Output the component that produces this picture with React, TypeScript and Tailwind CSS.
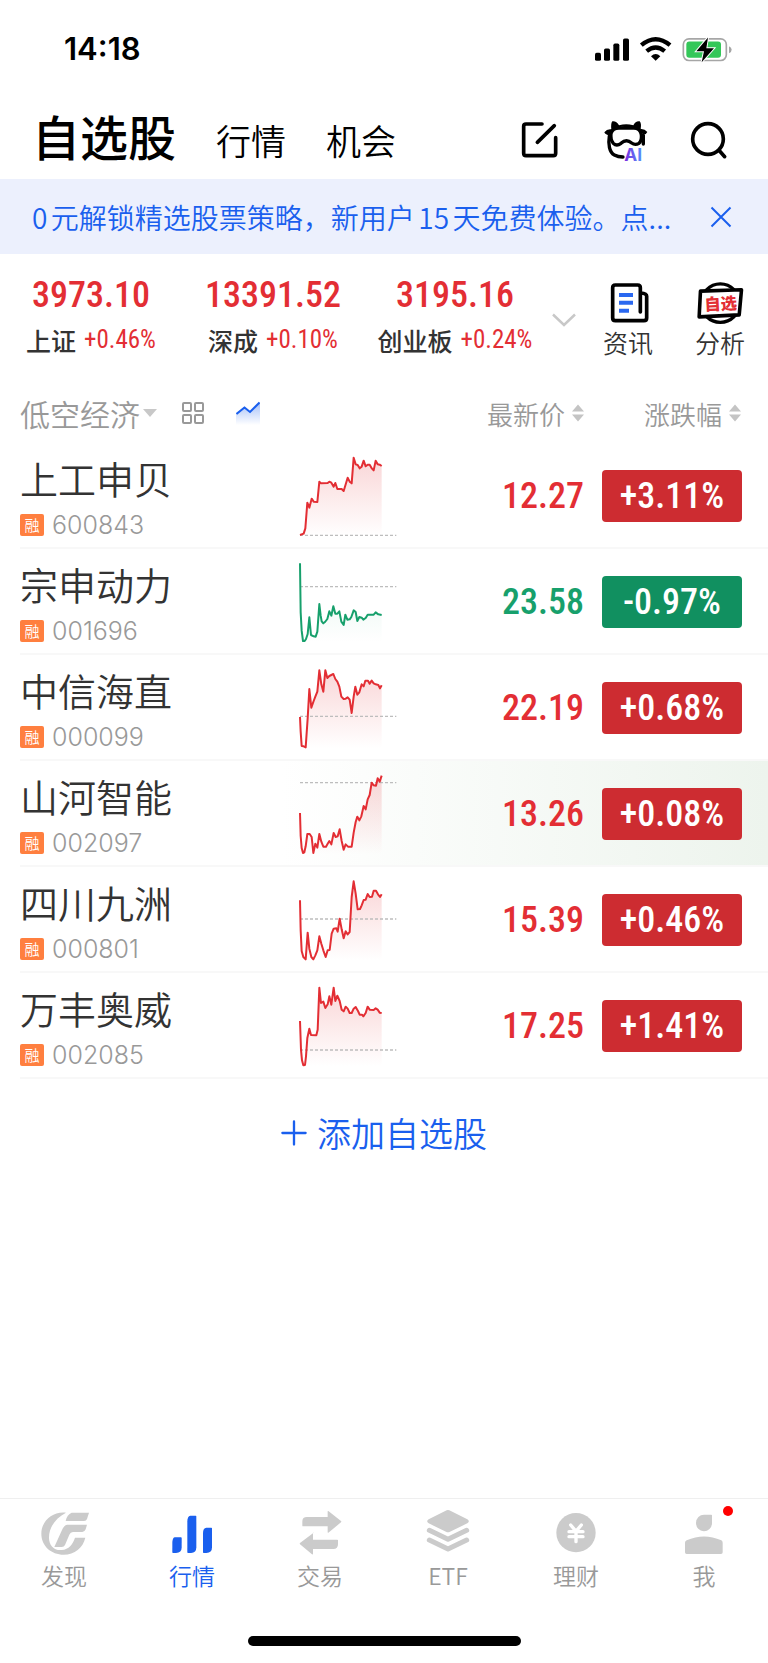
import type { ReactNode } from "react";
import clsx from "clsx";

type Stock = {
  name: string;
  code: string;
  price: string;
  change: string;
  up: boolean;
  base: number;
  line: string;
  highlight?: boolean;
};

const indices = [
  { name: "上证", value: "3973.10", change: "+0.46%" },
  { name: "深成", value: "13391.52", change: "+0.10%" },
  { name: "创业板", value: "3195.16", change: "+0.24%" },
];

// Intraday lines, drawn on a 294x318 grid
const stocks: Stock[] = [
  {
    name: "上工申贝", code: "600843", price: "12.27", change: "+3.11%", up: true, base: 277,
    line: "3,276 14,272 19,256 25,179 31,194 38,167 44,176 55,177 61,116 66,121 86,120 91,116 97,119 104,131 109,120 115,138 128,138 134,144 146,104 152,116 158,121 164,44 170,64 176,66 182,76 188,71 194,53 200,70 206,65 212,65 219,77 224,82 230,53 236,64 242,65 248,69",
  },
  {
    name: "宗申动力", code: "001696", price: "23.58", change: "-0.97%", up: false, base: 113,
    line: "3,43 5,190 8,245 12,276 17,276 21,270 26,255 31,205 36,258 44,262 50,263 55,248 61,165 65,200 68,217 73,223 78,219 85,210 91,187 97,200 103,172 109,194 115,194 121,187 127,218 134,228 139,197 145,212 152,211 157,204 164,184 170,189 175,216 181,204 188,206 193,212 200,207 206,197 224,197 230,190 238,196 248,198",
  },
  {
    name: "中信海直", code: "000099", price: "22.19", change: "+0.68%", up: true, base: 184,
    line: "3,186 5,230 8,273 14,274 20,277 26,190 31,102 37,158 44,138 49,125 55,110 61,46 67,88 73,110 79,46 85,69 91,63 103,57 109,72 115,80 121,95 127,125 134,132 140,131 146,127 152,134 158,174 164,125 169,95 175,119 181,112 188,88 194,94 199,77 207,77 212,86 218,77 224,85 230,88 238,90 243,100 248,91",
  },
  {
    name: "山河智能", code: "002097", price: "13.26", change: "+0.08%", up: true, base: 65, highlight: true,
    line: "3,156 5,225 8,261 12,276 16,274 20,256 25,219 32,219 38,228 43,276 49,248 55,260 61,219 67,242 73,257 81,257 86,248 91,240 97,250 104,216 110,228 116,226 122,205 128,240 134,266 140,250 147,257 158,257 164,215 170,183 175,167 181,178 187,166 194,135 200,145 206,115 212,102 218,65 224,73 231,74 236,52 242,62 248,44",
  },
  {
    name: "四川九洲", code: "000801", price: "15.39", change: "+0.46%", up: true, base: 156,
    line: "3,100 5,190 8,252 13,270 20,277 26,197 31,245 37,270 43,277 49,265 55,250 61,208 67,230 73,250 80,270 86,250 92,249 98,200 104,185 112,184 116,194 122,155 128,187 134,214 140,193 146,202 152,195 158,90 164,43 170,80 176,127 183,126 188,115 194,99 200,98 206,81 212,90 219,89 224,71 231,71 237,82 243,90 248,82",
  },
  {
    name: "万丰奥威", code: "002085", price: "17.25", change: "+1.41%", up: true, base: 231,
    line: "3,144 6,230 9,262 13,277 18,276 21,250 25,195 31,167 36,186 52,187 56,170 61,44 66,90 73,86 79,105 86,94 91,70 97,95 104,44 109,84 115,68 122,84 128,110 134,115 140,101 146,107 152,120 158,120 164,107 170,102 177,114 182,125 189,125 193,130 200,120 206,101 212,110 224,111 230,106 236,110 242,119 248,120",
  },
];

function Sparkline({ stock }: { stock: Stock }) {
  const color = stock.up ? "#e32e34" : "#17a06c";
  const id = `fill-${stock.code}`;
  return (
    <svg viewBox="0 0 294 318" className="block h-[106px] w-[98px]" fill="none" aria-hidden="true">
      <defs>
        <linearGradient id={id} x1="0" y1="40" x2="0" y2="280" gradientUnits="userSpaceOnUse">
          <stop offset="0" stopColor={color} stopOpacity={stock.up ? 0.2 : 0.12} />
          <stop offset="1" stopColor={color} stopOpacity="0" />
        </linearGradient>
      </defs>
      <polygon points={`3,280 ${stock.line} 248,280`} fill={`url(#${id})`} />
      <path d={`M3 ${stock.base}H292`} stroke="#bdbdbd" strokeWidth="4" strokeDasharray="9 6" />
      <polyline points={stock.line} stroke={color} strokeWidth="6" strokeLinejoin="round" />
    </svg>
  );
}

function SortIcon() {
  return (
    <svg viewBox="0 0 12 18" className="h-[18px] w-3" fill="#c4c4c4" aria-hidden="true">
      <path d="M6 0.5L12 7.5H0zM6 17.5L12 10.5H0z" />
    </svg>
  );
}

function StatusBar() {
  return (
    <div className="flex h-[98px] items-center justify-between pr-9 pl-16">
      <span className="font-[Inter,sans-serif] text-[31px] font-semibold">14:18</span>
      <svg viewBox="630 106 414 80" className="h-[27px] w-[138px]" aria-hidden="true">
        <rect x="633" y="156" width="18" height="24" rx="5" />
        <rect x="660" y="143" width="18" height="37" rx="5" />
        <rect x="688" y="128" width="18" height="52" rx="5" />
        <rect x="717" y="113" width="18" height="67" rx="5" />
        <path d="M772 133Q815 97 858 133M788 151Q815 129 842 151" fill="none" stroke="#000" strokeWidth="13" />
        <path d="M801 166Q815 153 829 166L815 180z" />
        <rect x="898" y="114" width="129" height="65" rx="17" fill="none" stroke="#a6a6a6" strokeWidth="5" />
        <rect x="907" y="122" width="104" height="49" rx="9" fill="#34c759" />
        <path d="M1035 136Q1043 139 1043 147T1035 157z" fill="#a6a6a6" />
        <path d="M972 110L937 151H960L953 184L990 142H967z" stroke="#fff" strokeWidth="6" paintOrder="stroke" />
      </svg>
    </div>
  );
}

function Header() {
  return (
    <header className="flex h-[81px] items-center justify-between pr-10 pl-8">
      <nav className="flex items-center gap-10">
        <a href="#watchlist" className="pb-2 text-[48px] leading-none font-medium">自选股</a>
        <a href="#market" className="pt-0.5 text-[35px] leading-none">行情</a>
        <a href="#chance" className="pt-0.5 text-[35px] leading-none">机会</a>
      </nav>
      <div className="flex items-center gap-10 pt-0.5">
        <button type="button" aria-label="编辑">
          <svg viewBox="405 357 126 126" className="h-[42px] w-[42px]" fill="none" stroke="#000" strokeWidth="11" strokeLinecap="round">
            <path d="M474 372H426Q419 372 419 379V460Q419 467 426 467H508Q515 467 515 460V413M460 427L511 377" />
          </svg>
        </button>
        <button type="button" aria-label="AI助手">
          <svg viewBox="650 355 141 138" className="h-[46px] w-[47px] overflow-visible" fill="none">
            <defs>
              <linearGradient id="ai" x1="722" y1="0" x2="778" y2="0" gradientUnits="userSpaceOnUse">
                <stop offset="0" stopColor="#7a2fe0" />
                <stop offset="1" stopColor="#4f9bff" />
              </linearGradient>
            </defs>
            <path d="M681 392Q679 374 684 368Q696 366 704 380Q726 374 747 380Q754 366 766 368Q772 374 769 391Q781 390 789 400Q786 408 776 409L768 392Q740 384 712 384L684 396L676 410Q663 409 660 401Q668 390 681 392z" fill="#000" />
            <path d="M704 388H748Q768 388 771 408Q773 426 764 434Q752 441 742 433Q726 419 710 434Q697 444 687 434Q678 424 680 405Q684 388 704 388z" fill="#fff" stroke="#000" strokeWidth="10" />
            <path d="M675 412C671 436 675 461 690 469Q701 475 716 475M777 410V436" stroke="#000" strokeWidth="10" strokeLinecap="round" />
            <text x="720" y="486" fill="url(#ai)" className="font-[Inter,sans-serif] text-[52px] leading-none font-bold">AI</text>
          </svg>
        </button>
        <button type="button" aria-label="搜索">
          <svg viewBox="912 357 120 126" className="h-[42px] w-10" fill="none" stroke="#000" strokeWidth="11" strokeLinecap="round">
            <circle cx="972" cy="417" r="46" />
            <path d="M1005 451L1022 470" />
          </svg>
        </button>
      </div>
    </header>
  );
}

function Banner() {
  return (
    <div className="flex h-[75px] items-center justify-between bg-[#ecf0fd] pr-9 pl-8 text-[#1a5fee]">
      <p className="text-[28px] [text-autospace:normal]">0元解锁精选股票策略，新用户15天免费体验。点...</p>
      <button type="button" aria-label="关闭">
        <svg viewBox="0 0 22 22" className="h-[22px] w-[22px]" stroke="currentColor" strokeWidth="2">
          <path d="M1.500 1.500L20.500 20.500M20.500 1.500L1.500 20.500" />
        </svg>
      </button>
    </div>
  );
}

function IndexBar() {
  return (
    <section className="flex h-[129px] items-start pt-[18px] pr-0.5">
      {indices.map((item) => (
        <div key={item.name} className="flex flex-1 flex-col items-center">
          <div className="font-[Roboto_Condensed,Noto_Sans_CJK_SC,sans-serif] text-[36px] leading-[46px] font-medium text-[#e32e34]">
            {item.value}
          </div>
          <div className="flex items-center gap-2 text-[25px] leading-[44px] font-medium whitespace-nowrap text-[#333]">
            {item.name}
            <span className="font-[Roboto_Condensed,Noto_Sans_CJK_SC,sans-serif] font-normal text-[#e32e34]">{item.change}</span>
          </div>
        </div>
      ))}
      <button type="button" aria-label="展开" className="flex h-24 w-9 items-center justify-center">
        <svg viewBox="0 0 24 14" className="h-3.5 w-6" fill="none" stroke="#c8c8c8" strokeWidth="2.500">
          <path d="M1 1.500L12 12L23 1.500" />
        </svg>
      </button>
      <a href="#news" className="flex w-[92px] flex-col items-center pt-2.5 text-[25px] leading-9 text-[#333]">
        <svg viewBox="669 94 126 126" className="h-[42px] w-[42px]" fill="none" aria-hidden="true">
          <path d="M769 184V111Q769 103 761 103H694Q686 103 686 111V202Q686 210 694 210H780Q788 210 788 202V137Q788 128 770 127" stroke="#000" strokeWidth="11" strokeLinecap="round" />
          <path d="M705 133H747M705 156H747M705 180H735" stroke="#2a68f0" strokeWidth="12" />
        </svg>
        资讯
      </a>
      <a href="#analysis" className="flex w-[92px] flex-col items-center pt-2.5 text-[25px] leading-9 text-[#333]">
        <svg viewBox="936 91 150 129" className="h-[42px] w-[50px]" fill="none" aria-hidden="true">
          <circle cx="1012" cy="156" r="59" stroke="#000" strokeWidth="10" />
          <path d="M951 119L1077 115L1070 192L947 198z" fill="#fff" stroke="#000" strokeWidth="11" strokeLinejoin="round" />
          <text x="963" y="176" fill="#e32e34" transform="rotate(-3 1012 156)" className="text-[50px] font-black">自选</text>
        </svg>
        分析
      </a>
    </section>
  );
}

function StockTable() {
  return (
    <div className="pl-5">
      <table className="w-full table-fixed border-collapse">
        <colgroup>
          <col className="w-[279px]" />
          <col />
          <col className="w-[150px]" />
          <col className="w-[166px]" />
        </colgroup>
        <thead className="text-[26px] text-[#999]">
          <tr className="h-[60px]">
            <th colSpan={2} className="p-0 font-[350]">
              <div className="flex items-center">
                <select aria-label="自选分组" className="appearance-none text-[30px] leading-10 outline-none">
                  <option>低空经济</option>
                </select>
                <svg viewBox="0 0 14 8" className="ml-[3px] h-2 w-3.5" fill="#c8c8c8" aria-hidden="true">
                  <path d="M0 0H14L7 8z" />
                </svg>
                <button type="button" aria-label="宫格" className="ml-6">
                  <svg viewBox="0 0 24 24" className="h-6 w-6" fill="none" stroke="#999" strokeWidth="2">
                    <rect x="2" y="2" width="8" height="8" rx="1" />
                    <rect x="14" y="2" width="8" height="8" rx="1" />
                    <rect x="2" y="14" width="8" height="8" rx="1" />
                    <rect x="14" y="14" width="8" height="8" rx="1" />
                  </svg>
                </button>
                <button type="button" aria-label="走势" className="ml-[31px]">
                  <svg viewBox="0 0 24 24" className="h-6 w-6" fill="none">
                    <defs>
                      <linearGradient id="trend" x1="0" y1="0" x2="0" y2="1">
                        <stop offset="0" stopColor="#1a5fee" stopOpacity="0.4" />
                        <stop offset="1" stopColor="#1a5fee" stopOpacity="0" />
                      </linearGradient>
                    </defs>
                    <path d="M0 13L8 6L14 11L24 1V24H0z" fill="url(#trend)" />
                    <path d="M0.500 13L8.500 6.500L14 11L23.500 1.500" stroke="#1a5fee" strokeWidth="2" />
                  </svg>
                </button>
              </div>
            </th>
            <th className="p-0 pr-[18px] font-[350]">
              <button type="button" className="ml-auto flex items-center gap-[7px] whitespace-nowrap">
                最新价
                <SortIcon />
              </button>
            </th>
            <th className="p-0 pr-[27px] font-[350]">
              <button type="button" className="ml-auto flex items-center gap-[7px] whitespace-nowrap">
                涨跌幅
                <SortIcon />
              </button>
            </th>
          </tr>
        </thead>
        <tbody>
          {stocks.map((stock) => (
            <tr
              key={stock.code}
              className={clsx(
                "h-[106px] shadow-[inset_0_-2px_0_#f8f8f8]",
                stock.highlight && "bg-linear-to-r from-white from-35% to-[#edf4ed]",
              )}
            >
              <td className="p-0 pt-1">
                <div className="text-[38px] leading-[50px] text-[#333]">{stock.name}</div>
                <div className="mt-1 flex items-center gap-2">
                  <span className="flex h-[22px] w-6 items-center justify-center rounded-xs bg-[#ff7f3f] text-[15px] text-white">融</span>
                  <span className="font-[Inter,sans-serif] text-[25px] leading-9 font-light text-[#999]">{stock.code}</span>
                </div>
              </td>
              <td className="p-0">
                <Sparkline stock={stock} />
              </td>
              <td
                className={clsx(
                  "p-0 pr-[18px] text-right font-[Roboto_Condensed,Noto_Sans_CJK_SC,sans-serif] text-[36px] font-medium",
                  stock.up ? "text-[#e32e34]" : "text-[#17a06c]",
                )}
              >
                {stock.price}
              </td>
              <td className="p-0 pr-[26px]">
                <div
                  className={clsx(
                    "rounded text-center font-[Roboto_Condensed,Noto_Sans_CJK_SC,sans-serif] text-[36px] leading-[52px] font-medium text-white",
                    stock.up ? "bg-[#cd2c31]" : "bg-[#119060]",
                  )}
                >
                  {stock.change}
                </div>
              </td>
            </tr>
          ))}
        </tbody>
      </table>
    </div>
  );
}

const tabs: { label: string; href: string; icon: ReactNode; active?: boolean; dot?: boolean }[] = [
  {
    label: "发现",
    href: "#discover",
    icon: (
      <>
        <path d="M81 8C42 3 7 32 7 71C7 108 37 134 74 134C107 134 132 113 139 83H108C101 104 90 118 68 120C44 122 30 105 30 83C30 51 50 24 81 8z" />
        <path d="M98 8H150L144 27Q142 33 135 33H80Q84 13 98 8z" />
        <path d="M84 44H144L140 58Q138 65 130 66H102Q94 66 91 74L78 105Q75 111 68 111H46L68 62Q75 45 84 44z" />
      </>
    ),
  },
  {
    label: "行情",
    href: "#quotes",
    active: true,
    icon: (
      <>
        <path d="M23 82H42Q44 82 44 84V112Q44 129 27 129H18Q16 129 16 127V99Q16 84 23 82z" />
        <path d="M70 17H86Q88 17 88 19V112Q88 129 72 129H63Q61 129 61 127V34Q61 19 70 17z" />
        <path d="M118 53H133Q135 53 135 55V112Q135 129 118 129H110Q108 129 108 127V69Q108 54 118 53z" />
      </>
    ),
  },
  {
    label: "交易",
    href: "#trade",
    icon: (
      <>
        <path d="M36 21H98V4Q98 2 100 3L138 33Q140 35 138 37L100 68Q98 69 98 67V49H24Q22 49 22 47V34Q22 21 36 21z" />
        <path d="M56 68Q54 67 54 70V89H127Q129 89 129 91V103Q129 117 115 117H54V132Q54 134 51 133L15 103Q13 101 15 99z" />
      </>
    ),
  },
  {
    label: "ETF",
    href: "#etf",
    icon: (
      <>
        <path d="M71 1Q75-1 79 1L133 28Q142 34 133 40L81 65Q75 68 69 65L17 40Q8 34 17 28z" />
        <path d="M19 61L75 88L131 61M19 90L75 117L131 90" fill="none" stroke="currentColor" strokeWidth="15" strokeLinecap="round" strokeLinejoin="round" />
      </>
    ),
  },
  {
    label: "理财",
    href: "#wealth",
    icon: (
      <>
        <circle cx="75" cy="68" r="59" />
        <path d="M59 45L75 64L91 45M75 64V95M54 65H96M54 80H96" fill="none" stroke="#fff" strokeWidth="10" strokeLinecap="round" />
      </>
    ),
  },
  {
    label: "我",
    href: "#me",
    dot: true,
    icon: (
      <>
        <path d="M75 14H97Q99 14 99 16V40A24 25 0 1 1 75 14z" />
        <path d="M18 98Q18 93 23 91Q75 68 127 91Q131 93 131 98V127Q131 132 126 132H23Q18 132 18 127z" />
      </>
    ),
  },
];

function TabBar() {
  return (
    <footer className="mt-auto border-t border-[#efefef]">
      <nav className="grid grid-cols-6">
        {tabs.map((tab) => (
          <a
            key={tab.label}
            href={tab.href}
            className={clsx(
              "flex flex-col items-center pt-[11px] text-[23px] leading-[34px]",
              tab.active ? "text-[#1a5fee]" : "text-[#999]",
            )}
          >
            <span className={clsx("relative", tab.active ? "text-[#1a5fee]" : "text-[#cbcbcb]")}>
              <svg viewBox="0 0 150 144" className="h-12 w-[50px]" fill="currentColor" aria-hidden="true">
                {tab.icon}
              </svg>
              {tab.dot && <i className="absolute -top-1 -right-1 h-2.5 w-2.5 rounded-full bg-[#ff0000]" />}
            </span>
            {tab.label}
          </a>
        ))}
      </nav>
      <div className="mx-auto mt-11 mb-[17px] h-2.5 w-[273px] rounded-full bg-black" />
    </footer>
  );
}

export default function App() {
  return (
    <div className="flex min-h-screen flex-col bg-white font-[Noto_Sans_CJK_SC,sans-serif] font-[350] text-black">
      <StatusBar />
      <Header />
      <Banner />
      <IndexBar />
      <StockTable />
      <button type="button" className="mx-auto mt-7 flex items-center gap-2.5 text-[34px] text-[#1a5fee]">
        <svg viewBox="0 0 28 28" className="h-[26px] w-[26px]" stroke="currentColor" strokeWidth="2.500" strokeLinecap="round" aria-hidden="true">
          <path d="M14 1.500V26.500M1.500 14H26.500" />
        </svg>
        添加自选股
      </button>
      <TabBar />
    </div>
  );
}
